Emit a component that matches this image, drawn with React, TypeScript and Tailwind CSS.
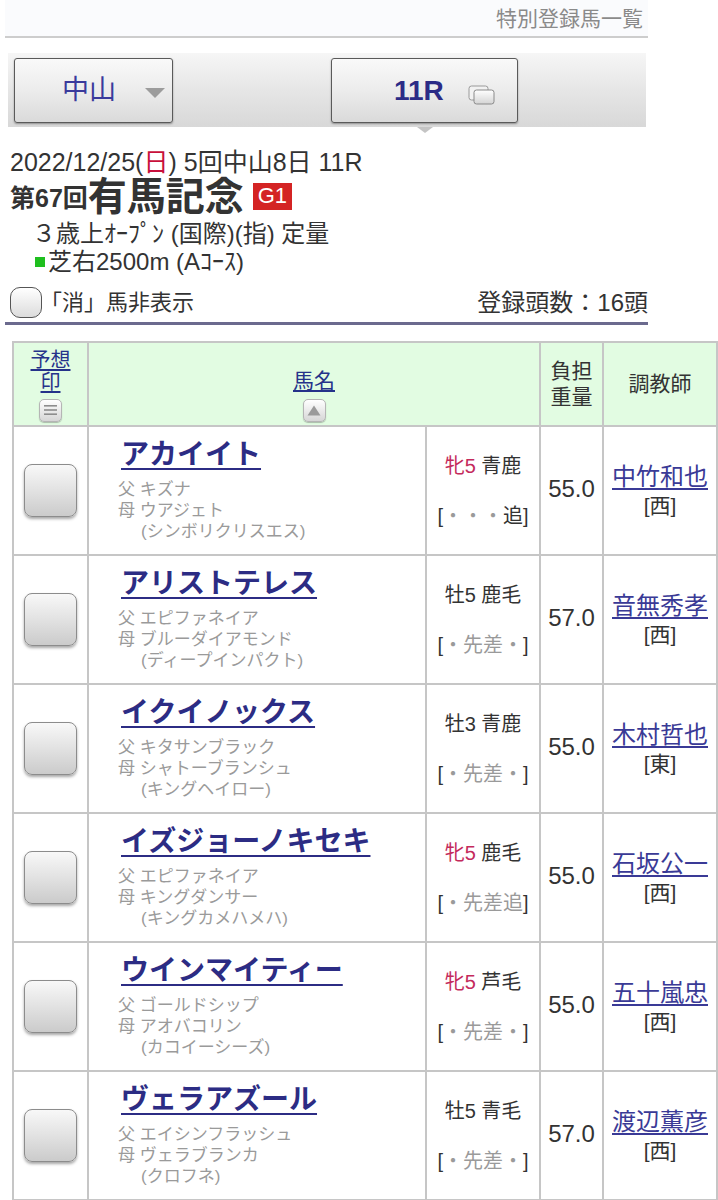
import React from "react";

type Horse = {
  name: string;
  sire: string;
  dam: string;
  bms: string;
  sex: string;
  female: boolean;
  color: string;
  style: React.ReactNode;
  weight: string;
  trainer: string;
  region: string;
};

const G = ({ children }: { children: React.ReactNode }) => (
  <span className="text-[#9a9a9a]">{children}</span>
);
const D = ({ children }: { children: React.ReactNode }) => (
  <span className="text-[#333]">{children}</span>
);

const std = (
  <>
    <D>[</D>
    <G>・先差・</G>
    <D>]</D>
  </>
);

const horses: Horse[] = [
  {
    name: "アカイイト",
    sire: "キズナ",
    dam: "ウアジェト",
    bms: "(シンボリクリスエス)",
    sex: "牝5",
    female: true,
    color: "青鹿",
    style: (
      <>
        <D>[</D>
        <G>・・・</G>
        <D>追]</D>
      </>
    ),
    weight: "55.0",
    trainer: "中竹和也",
    region: "[西]",
  },
  {
    name: "アリストテレス",
    sire: "エピファネイア",
    dam: "ブルーダイアモンド",
    bms: "(ディープインパクト)",
    sex: "牡5",
    female: false,
    color: "鹿毛",
    style: std,
    weight: "57.0",
    trainer: "音無秀孝",
    region: "[西]",
  },
  {
    name: "イクイノックス",
    sire: "キタサンブラック",
    dam: "シャトーブランシュ",
    bms: "(キングヘイロー)",
    sex: "牡3",
    female: false,
    color: "青鹿",
    style: std,
    weight: "55.0",
    trainer: "木村哲也",
    region: "[東]",
  },
  {
    name: "イズジョーノキセキ",
    sire: "エピファネイア",
    dam: "キングダンサー",
    bms: "(キングカメハメハ)",
    sex: "牝5",
    female: true,
    color: "鹿毛",
    style: (
      <>
        <D>[</D>
        <G>・先差追</G>
        <D>]</D>
      </>
    ),
    weight: "55.0",
    trainer: "石坂公一",
    region: "[西]",
  },
  {
    name: "ウインマイティー",
    sire: "ゴールドシップ",
    dam: "アオバコリン",
    bms: "(カコイーシーズ)",
    sex: "牝5",
    female: true,
    color: "芦毛",
    style: std,
    weight: "55.0",
    trainer: "五十嵐忠",
    region: "[西]",
  },
  {
    name: "ヴェラアズール",
    sire: "エイシンフラッシュ",
    dam: "ヴェラブランカ",
    bms: "(クロフネ)",
    sex: "牡5",
    female: false,
    color: "青毛",
    style: std,
    weight: "57.0",
    trainer: "渡辺薫彦",
    region: "[西]",
  },
];

const cell = "border-2 border-[#c6c6c6] align-middle";

function StackIcon() {
  return (
    <svg width="27" height="20" viewBox="0 0 27 20">
      <defs>
        <linearGradient id="sg" x1="0" y1="0" x2="0" y2="1">
          <stop offset="0" stopColor="#ffffff" />
          <stop offset="1" stopColor="#d4d4d4" />
        </linearGradient>
      </defs>
      <rect x="1" y="1" width="19" height="14" rx="2.5" fill="#f2f2f2" stroke="#9a9a9a" strokeWidth="1" />
      <rect x="6" y="5" width="20" height="14" rx="2.5" fill="url(#sg)" stroke="#8a8a8a" strokeWidth="1" />
    </svg>
  );
}

function SmallBtn({ kind }: { kind: "menu" | "up" }) {
  return (
    <div className="mx-auto flex h-[23px] w-[23px] items-center justify-center rounded-[5px] border border-[#b5b5b5] bg-gradient-to-b from-[#ffffff] to-[#d6d6d6] shadow-[0_1px_1px_rgba(0,0,0,0.25)]">
      {kind === "menu" ? (
        <svg width="13" height="12" viewBox="0 0 13 12">
          <rect x="0" y="1" width="13" height="1.6" fill="#8d8d8d" />
          <rect x="0" y="5.2" width="13" height="1.6" fill="#8d8d8d" />
          <rect x="0" y="9.4" width="13" height="1.6" fill="#8d8d8d" />
        </svg>
      ) : (
        <svg width="14" height="11" viewBox="0 0 14 11">
          <polygon points="7,0.5 13.5,10.5 0.5,10.5" fill="#9a9a9a" />
        </svg>
      )}
    </div>
  );
}

export default function App() {
  return (
    <div className="min-h-[1200px] w-[718px] overflow-hidden bg-white font-[Liberation_Sans,Noto_Sans_CJK_JP,sans-serif] text-[#333]">
      <div className="ml-[5px] w-[643px]">
        {/* title bar */}
        <div className="flex h-[38px] items-center justify-end border-b-2 border-[#cdcdcd] bg-[#fafbfd] pr-[5px] text-[21px] leading-none text-[#8a8a8a]">
          特別登録馬一覧
        </div>

        {/* selector bar */}
        <div className="relative ml-[3px] mt-[15px] flex h-[74px] w-[638px] items-start gap-[158px] bg-gradient-to-b from-[#f6f6f6] via-[#e6e6e6] to-[#d8d8d8] pl-[6px] pt-[5px]">
          <div className="flex h-[65px] w-[159px] items-center rounded-[3px] border border-[#5a5a5a] bg-gradient-to-b from-[#f9f9f9] via-[#ececec] to-[#dadada] pl-[47px] shadow-[0_1px_2px_rgba(0,0,0,0.35)]">
            <span className="text-[27px] leading-none text-[#3a3a9c]">中山</span>
            <svg className="ml-[29px] mt-[4px]" width="20" height="10" viewBox="0 0 20 10">
              <polygon points="0,0 20,0 10,10" fill="#9c9c9c" />
            </svg>
          </div>
          <div className="flex h-[65px] w-[187px] items-center rounded-[3px] border border-[#5a5a5a] bg-gradient-to-b from-[#f9f9f9] via-[#ececec] to-[#dadada] pl-[62px] shadow-[0_1px_2px_rgba(0,0,0,0.35)]">
            <span className="text-[28px] font-bold leading-none text-[#2b2b86]">11R</span>
            <span className="ml-[24px] mt-[8px]">
              <StackIcon />
            </span>
          </div>
          <div className="absolute left-[409px] top-[74px] h-0 w-0 border-l-[8px] border-r-[8px] border-t-[6px] border-l-transparent border-r-transparent border-t-[#c4c4c4]" />
        </div>

        {/* race info */}
        <div className="mt-[21px] pl-[5px]">
          <div className="text-[25px] leading-[28px]">
            2022/12/25(<span className="text-[#c8103c]">日</span>) 5回中山8日 11R
          </div>
          <div className="flex h-[40px] items-center">
            <span className="mt-[4px] text-[25px] font-bold leading-none">第67回</span>
            <span className="text-[39px] font-bold leading-none">有馬記念</span>
            <span className="ml-[9px] flex h-[27px] w-[39px] items-center justify-center bg-[#d42424] text-[22px] leading-none text-white">
              G1
            </span>
          </div>
          <div className="mt-[4px] pl-[22px] text-[24px] leading-[28px]">３歳上ｵｰﾌﾟﾝ (国際)(指) 定量</div>
          <div className="flex items-center pl-[25px] text-[24px] leading-[28px]">
            <span className="mr-[3px] inline-block h-[10px] w-[10px] bg-[#1fbf1f]" />
            芝右2500m (Aｺｰｽ)
          </div>
        </div>
        <div className="mt-[10px] flex h-[39px] items-center justify-between border-b-[3px] border-[#6b6a8e] pb-[3px] pl-[5px] leading-none">
          <div className="flex items-center text-[22px]">
            <span className="inline-block h-[31px] w-[32px] rounded-[10px] border border-[#555] bg-gradient-to-b from-[#ffffff] to-[#dcdcdc]" />
            <span className="-ml-[2px]">「消」馬非表示</span>
          </div>
          <span className="text-[24px]">登録頭数：16頭</span>
        </div>
      </div>

      {/* table */}
      <table className="ml-[12px] mt-[16px] w-[704px] table-fixed border-collapse">
        <colgroup>
          <col className="w-[75px]" />
          <col className="w-[338px]" />
          <col className="w-[114px]" />
          <col className="w-[63px]" />
          <col className="w-[114px]" />
        </colgroup>
        <thead>
          <tr className="h-[84px] bg-[#e2fce2]">
            <th className={`${cell} pt-[2px] text-center font-normal`}>
              <div className="text-[20px] leading-[22px] text-[#25328a] underline underline-offset-2">
                予想
                <br />印
              </div>
              <div className="mt-[6px]">
                <SmallBtn kind="menu" />
              </div>
            </th>
            <th colSpan={2} className={`${cell} pt-[22px] text-center font-normal`}>
              <div className="text-[21px] leading-[24px] text-[#25328a] underline underline-offset-2">馬名</div>
              <div className="mt-[6px]">
                <SmallBtn kind="up" />
              </div>
            </th>
            <th className={`${cell} text-center font-normal`}>
              <div className="text-[21px] leading-[26px] text-[#333]">
                負担
                <br />
                重量
              </div>
            </th>
            <th className={`${cell} text-center font-normal`}>
              <div className="text-[21px] leading-[26px] text-[#333]">調教師</div>
            </th>
          </tr>
        </thead>
        <tbody>
          {horses.map((h) => (
            <tr key={h.name} className="h-[129px]">
              <td className={cell}>
                <div className="mx-auto h-[53px] w-[53px] rounded-[8px] border border-[#8c8c8c] bg-gradient-to-b from-[#f8f8f8] via-[#e2e2e2] to-[#cbcbcb] shadow-[0_2px_3px_rgba(0,0,0,0.35)]" />
              </td>
              <td className={`${cell} pl-[32px]`}>
                <div className="text-[28px] font-bold leading-[32px] text-[#2c2c84] underline decoration-2 underline-offset-[4px]">
                  {h.name}
                </div>
                <div className="mt-[8px] text-[17px] leading-[21px] text-[#9a9a9a]">
                  <div className="-ml-[3px]">父 {h.sire}</div>
                  <div className="-ml-[3px]">母 {h.dam}</div>
                  <div className="pl-[20px]">{h.bms}</div>
                </div>
              </td>
              <td className={`${cell} text-center`}>
                <div className="text-[20px] leading-[24px]">
                  <span className={h.female ? "text-[#c42a5c]" : "text-[#333]"}>{h.sex}</span> {h.color}
                </div>
                <div className="mt-[26px] text-[20px] leading-[24px]">{h.style}</div>
              </td>
              <td className={`${cell} text-center`}>
                <span className="text-[24px] leading-none">{h.weight}</span>
              </td>
              <td className={`${cell} text-center`}>
                <div className="text-[24px] leading-[30px] text-[#3a3a96] underline underline-offset-[3px]">
                  {h.trainer}
                </div>
                <div className="text-[21px] leading-[28px]">{h.region}</div>
              </td>
            </tr>
          ))}
        </tbody>
      </table>
    </div>
  );
}
